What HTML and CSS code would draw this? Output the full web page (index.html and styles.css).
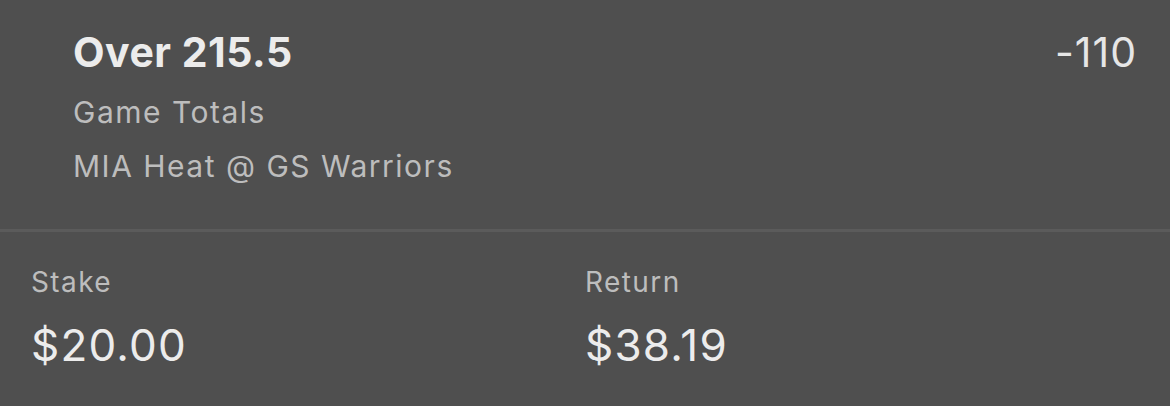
FILE: index.html
```html
<!DOCTYPE html>
<html lang="en">
<head>
  <meta charset="UTF-8" />
  <meta name="viewport" content="width=device-width, initial-scale=1.0"/>
  <title>Bet Slip</title>
  <link rel="stylesheet" href="styles.css">
</head>
<body>

  <div class="bet-card">
    <div class="selection">
      <div class="selection-info">
        <div class="pick">Over 215.5</div>
        <div class="market">Game Totals</div>
        <div class="market">MIA Heat @ GS Warriors</div>
      </div>
      <div class="odds">-110</div>
    </div>

    <div class="totals">
      <div class="total-item">
        <div class="total-label">Stake</div>
        <div class="total-value">$20.00</div>
      </div>
      <div class="total-item">
        <div class="total-label">Return</div>
        <div class="total-value">$38.19</div>
      </div>
    </div>
  </div>

</body>
</html>
```

FILE: styles.css
```css
body {
  margin: 0;
  font-family: Inter, "Noto Sans", sans-serif;
  background-color: #4f4f4f;
}

.bet-card {
  background-color: #4f4f4f;
  height: 406px;
}

.selection {
  display: flex;
  justify-content: space-between;
  align-items: flex-start;
  padding: 27px 33px 36px 73px;
  border-bottom: 3px solid #5b5b5b;
}

.pick {
  color: #ececec;
  font-size: 41px;
  font-weight: bold;
  letter-spacing: 0.5px;
  line-height: 50px;
  margin-bottom: 8px;
}

.market {
  color: #bdbdbd;
  font-size: 30px;
  letter-spacing: 1.5px;
  line-height: 54px;
}

.odds {
  color: #e6e6e6;
  font-size: 41px;
  letter-spacing: 1px;
  line-height: 50px;
}

.totals {
  display: grid;
  grid-template-columns: 1fr 1fr;
  padding: 32px 31px 0 31px;
}

.total-label {
  color: #bdbdbd;
  font-size: 28px;
  letter-spacing: 1.4px;
  line-height: 36px;
  margin-bottom: 17px;
}

.total-value {
  color: #ececec;
  font-size: 44px;
  letter-spacing: 1.2px;
  line-height: 56px;
  margin-top: 1px;
}
```
